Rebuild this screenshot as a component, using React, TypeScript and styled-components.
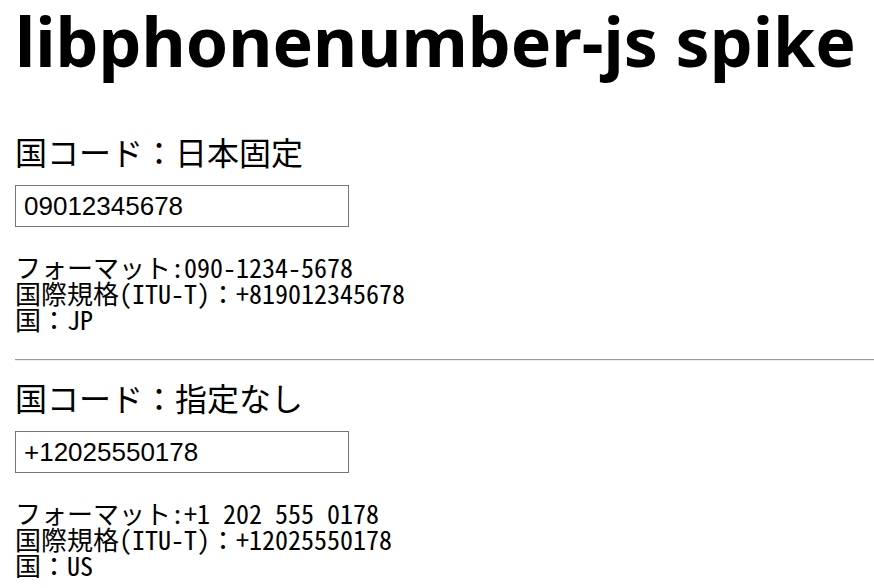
import * as React from "react";
import styled, { createGlobalStyle } from "styled-components";

const GlobalStyle = createGlobalStyle`
  html, body {
    margin: 0;
    padding: 0;
    background: #fff;
    color: #000;
    font-family: "Noto Sans", "Noto Sans CJK JP", sans-serif;
  }
`;

const Page = styled.main`
  padding: 0 0 0 15px;
`;

const Title = styled.h1`
  margin: 0 0 49px 0;
  font-family: "Noto Sans", sans-serif;
  font-weight: 700;
  font-size: 68px;
  line-height: 82px;
  letter-spacing: 0;
  white-space: nowrap;
`;

const Section = styled.section`
  display: flex;
  flex-direction: column;
  align-items: flex-start;
`;

const Heading = styled.h2`
  margin: 0 0 14px 0;
  font-family: "Noto Sans CJK JP", sans-serif;
  font-weight: 400;
  font-size: 32px;
  line-height: 40px;
`;

const PhoneInput = styled.input`
  box-sizing: border-box;
  width: 334px;
  height: 42px;
  margin: 0 0 27px 0;
  padding: 0 8px;
  border: 1px solid #767676;
  border-radius: 0;
  font-family: "Liberation Sans", Arial, sans-serif;
  font-size: 26px;
  color: #000;
  outline: none;
`;

const Result = styled.div`
  font-family: "Noto Sans Mono CJK JP", "Liberation Mono", "Noto Sans CJK JP", monospace;
  font-size: 26px;
  line-height: 26px;
`;

const Line = styled.div`
  white-space: pre;
`;

const Divider = styled.hr`
  margin: 27px 0 16px 0;
  border: 0;
  border-top: 1px solid #9a9a9a;
  border-bottom: 1px solid #eeeeee;
  height: 0;
`;

type Sample = {
  label: string;
  value: string;
  format: string;
  e164: string;
  country: string;
};

const samples: Sample[] = [
  {
    label: "国コード：日本固定",
    value: "09012345678",
    format: "090-1234-5678",
    e164: "+819012345678",
    country: "JP",
  },
  {
    label: "国コード：指定なし",
    value: "+12025550178",
    format: "+1 202 555 0178",
    e164: "+12025550178",
    country: "US",
  },
];

const PhoneSection = ({ sample }: { sample: Sample }) => (
  <Section>
    <Heading>{sample.label}</Heading>
    <PhoneInput type="text" defaultValue={sample.value} />
    <Result>
      <Line>フォーマット:{sample.format}</Line>
      <Line>国際規格(ITU-T)：{sample.e164}</Line>
      <Line>国：{sample.country}</Line>
    </Result>
  </Section>
);

const App = (): JSX.Element => (
  <>
    <GlobalStyle />
    <Page>
      <Title>libphonenumber-js spike</Title>
      {samples.map((s, i) => (
        <React.Fragment key={i}>
          {i > 0 && <Divider />}
          <PhoneSection sample={s} />
        </React.Fragment>
      ))}
    </Page>
  </>
);

export default App;
